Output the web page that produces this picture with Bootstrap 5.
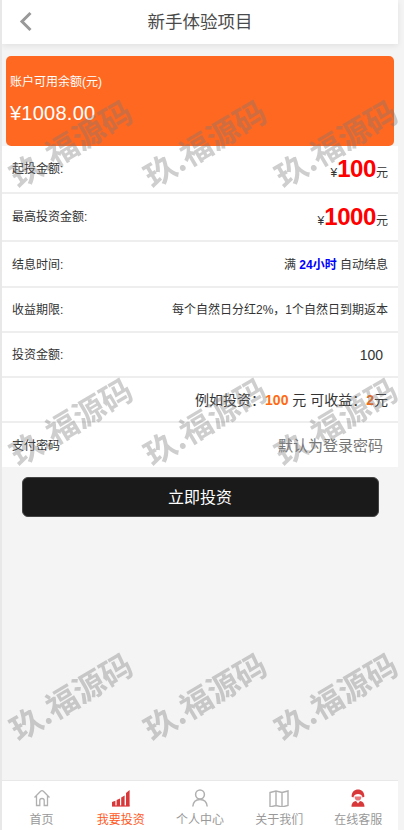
<!DOCTYPE html>
<html lang="zh-CN">
<head>
  <meta charset="UTF-8">
  <meta name="viewport" content="width=device-width, initial-scale=1.0">
  <title>新手体验项目</title>
  <link href="https://cdn.jsdelivr.net/npm/bootstrap@5.3.0/dist/css/bootstrap.min.css" rel="stylesheet">
  <style>
    html, body {
      height: 830px;
      overflow: hidden;
    }

    body {
      background-color: #f4f4f4;
      font-family: "Liberation Sans", "Noto Sans CJK SC", sans-serif;
      color: #333;
      border-left: 2px solid #e8e8e8;
    }

    .page-wrap {
      width: 396px;
      height: 830px;
    }

    .top-bar {
      height: 44px;
      background: #fff;
      box-shadow: 0 2px 6px rgba(0, 0, 0, .08);
      color: #4a4a4a;
      font-size: 17.5px;
    }

    .top-bar svg {
      left: 17px;
      top: 10px;
    }

    .balance-box {
      height: 90px;
      margin: 12px 4px 0;
      padding: 17px 4px 0;
      background: #ff6821;
      border-radius: 5px;
      color: #fff;
    }

    .balance-label {
      font-size: 12px;
      line-height: 18px;
    }

    .balance-num {
      font-size: 20px;
      line-height: 28px;
      margin-top: 8px;
      letter-spacing: .25px;
    }

    .info-row {
      background: #fff;
      padding: 0 10px;
      font-size: 12px;
      color: #333;
      border-bottom: 2px solid #eee;
    }

    .h-48 { height: 48px; }
    .h-46 { height: 46px; padding-top: 1px; }
    .h-45 { height: 45px; padding-top: 1px; }
    .h-44 { height: 44px; padding-top: 2px; }
    .no-line { border-bottom: 0; }

    .amount-red {
      color: #f00;
      font-size: 24px;
      font-weight: 700;
      line-height: 24px;
      letter-spacing: -.4px;
    }

    .small-yen { font-size: 12px; }
    .txt-blue { color: #00f; font-weight: 700; }
    .txt-orange { color: #ff6a13; font-weight: 700; font-size: 14px; }
    .txt-14 { font-size: 14px; }
    .txt-value { font-size: 14px; padding-right: 5px; color: #333; }
    .txt-hint { font-size: 15px; padding-right: 5px; color: #777; }

    .invest-btn {
      display: block;
      width: 357px;
      height: 40px;
      margin: 10px 0 0 19.5px;
      padding: 2px 0 0;
      background: #1a1a1a;
      border: 1px solid #444;
      border-radius: 6px;
      color: #fff;
      font-size: 16px;
    }

    .bottom-bar {
      left: 2px;
      bottom: 0;
      width: 396px;
      height: 50px;
      background: #fff;
      border-top: 1px solid #e8e8e8;
    }

    .tab-item {
      width: 20%;
      font-size: 12px;
      line-height: 14px;
      color: #999;
    }

    .tab-item svg {
      display: block;
      margin: 8px auto 6px;
    }

    .tab-active { color: #ff5a1f; }

    /* watermark tiles lie over the whole page */
    .mark-layer {
      top: 0;
      left: 0;
      width: 404px;
      height: 830px;
      pointer-events: none;
    }

    .mark-tile {
      width: max-content;
      font-family: "Noto Sans CJK SC", sans-serif;
      font-size: 31.5px;
      font-weight: 700;
      line-height: 32px;
      color: rgba(120, 120, 120, .36);
      white-space: nowrap;
      transform: translate(-50%, -50%) rotate(-31deg);
    }
  </style>
</head>
<body>
  <div class="page-wrap">
    <div class="top-bar position-relative d-flex align-items-center justify-content-center">
      <svg class="position-absolute" width="16" height="24" viewBox="0 0 16 24">
        <path d="M11.5 3 L3 11.5 L11.5 20" fill="none" stroke="#999" stroke-width="3"/>
      </svg>
      新手体验项目
    </div>

    <div class="balance-box">
      <div class="balance-label">账户可用余额(元)</div>
      <div class="balance-num">¥1008.00</div>
    </div>

    <div class="info-row h-48 d-flex align-items-center justify-content-between">
      <span>起投金额:</span>
      <span><span class="small-yen">¥</span><span class="amount-red">100</span>元</span>
    </div>
    <div class="info-row h-48 d-flex align-items-center justify-content-between">
      <span>最高投资金额:</span>
      <span><span class="small-yen">¥</span><span class="amount-red">1000</span>元</span>
    </div>
    <div class="info-row h-46 d-flex align-items-center justify-content-between">
      <span>结息时间:</span>
      <span>满 <span class="txt-blue">24小时</span> 自动结息</span>
    </div>
    <div class="info-row h-45 d-flex align-items-center justify-content-between">
      <span>收益期限:</span>
      <span>每个自然日分红2%，1个自然日到期返本</span>
    </div>
    <div class="info-row h-45 d-flex align-items-center justify-content-between">
      <span>投资金额:</span>
      <span class="txt-value">100</span>
    </div>
    <div class="info-row h-45 d-flex align-items-center justify-content-end">
      <span class="txt-14">例如投资：<span class="txt-orange">100</span> 元 可收益：<span class="txt-orange">2</span>元</span>
    </div>
    <div class="info-row no-line h-44 d-flex align-items-center justify-content-between">
      <span>支付密码</span>
      <span class="txt-hint">默认为登录密码</span>
    </div>

    <button class="invest-btn" type="button">立即投资</button>
  </div>

  <div class="bottom-bar position-fixed d-flex text-center">
    <div class="tab-item">
      <svg width="18" height="18" viewBox="0 0 18 18" fill="none" stroke="#b0b0b0" stroke-width="1.3">
        <path d="M1.5 8.5 L7.6 2.2 Q9 1 10.4 2.2 L16.5 8.5 M3.5 7 V16.5 H6.8 V11.5 Q6.8 9.5 9 9.5 Q11.2 9.5 11.2 11.5 V16.5 H14.5 V7"/>
      </svg>
      首页
    </div>
    <div class="tab-item tab-active">
      <svg width="18" height="18" viewBox="0 0 18 18" fill="#d9383a">
        <path d="M0 13 L3.4 11.8 V17 H0 Z"/>
        <path d="M4.6 11 L8 9.6 V17 H4.6 Z"/>
        <path d="M9.2 8.4 L12.6 6.4 V17 H9.2 Z"/>
        <path d="M14 4 L17.6 1 V17 H14 Z"/>
        <rect x="0" y="16.4" width="17.6" height="1.2"/>
      </svg>
      我要投资
    </div>
    <div class="tab-item">
      <svg width="18" height="18" viewBox="0 0 18 18" fill="none" stroke="#b0b0b0" stroke-width="1.5">
        <circle cx="9" cy="5.5" r="4.4"/>
        <path d="M1.8 17.5 C2.2 12.5 5 10.4 9 10.4 C13 10.4 15.8 12.5 16.2 17.5"/>
      </svg>
      个人中心
    </div>
    <div class="tab-item">
      <svg width="20" height="18" viewBox="0 0 20 18" fill="none" stroke="#b0b0b0" stroke-width="1.4">
        <path d="M1 3.5 L7 2 L13 3.5 L19 2 V16.5 L13 18 L7 16.5 L1 18 Z M7 2 V16.5 M13 3.5 V18"/>
      </svg>
      关于我们
    </div>
    <div class="tab-item">
      <svg width="18" height="18" viewBox="0 0 18 18" fill="#d9383a">
        <path d="M2.6 7.8 C2.6 3 5.5 .6 9 .6 C12.5 .6 15.4 3 15.4 7.8 L13.6 8.4 C13 5.8 11 5 9 5 C7 5 5 5.8 4.4 8.4 Z"/>
        <path d="M5.6 7.5 H12.4 C12.3 10.5 11 11.6 9 11.6 C7 11.6 5.7 10.5 5.6 7.5 Z" fill="#e9777a"/>
        <path d="M2.5 17.8 C2.5 14 4.5 12.4 7 12 L9 14.4 L11 12 C13.5 12.4 15.5 14 15.5 17.8 Z"/>
      </svg>
      在线客服
    </div>
  </div>

  <div class="mark-layer position-fixed" id="marks"></div>

  <script>
    // watermark grid, three rows of three, placed by tile centre
    const markLayer = document.getElementById('marks');
    [142, 420, 695].forEach(y => {
      [70, 204, 335].forEach(x => {
        const tile = document.createElement('div');
        tile.className = 'mark-tile position-absolute';
        tile.textContent = '玖.福源码';
        tile.style.left = x + 'px';
        tile.style.top = y + 'px';
        markLayer.appendChild(tile);
      });
    });
  </script>
  <script src="https://cdn.jsdelivr.net/npm/bootstrap@5.3.0/dist/js/bootstrap.bundle.min.js"></script>
</body>
</html>
